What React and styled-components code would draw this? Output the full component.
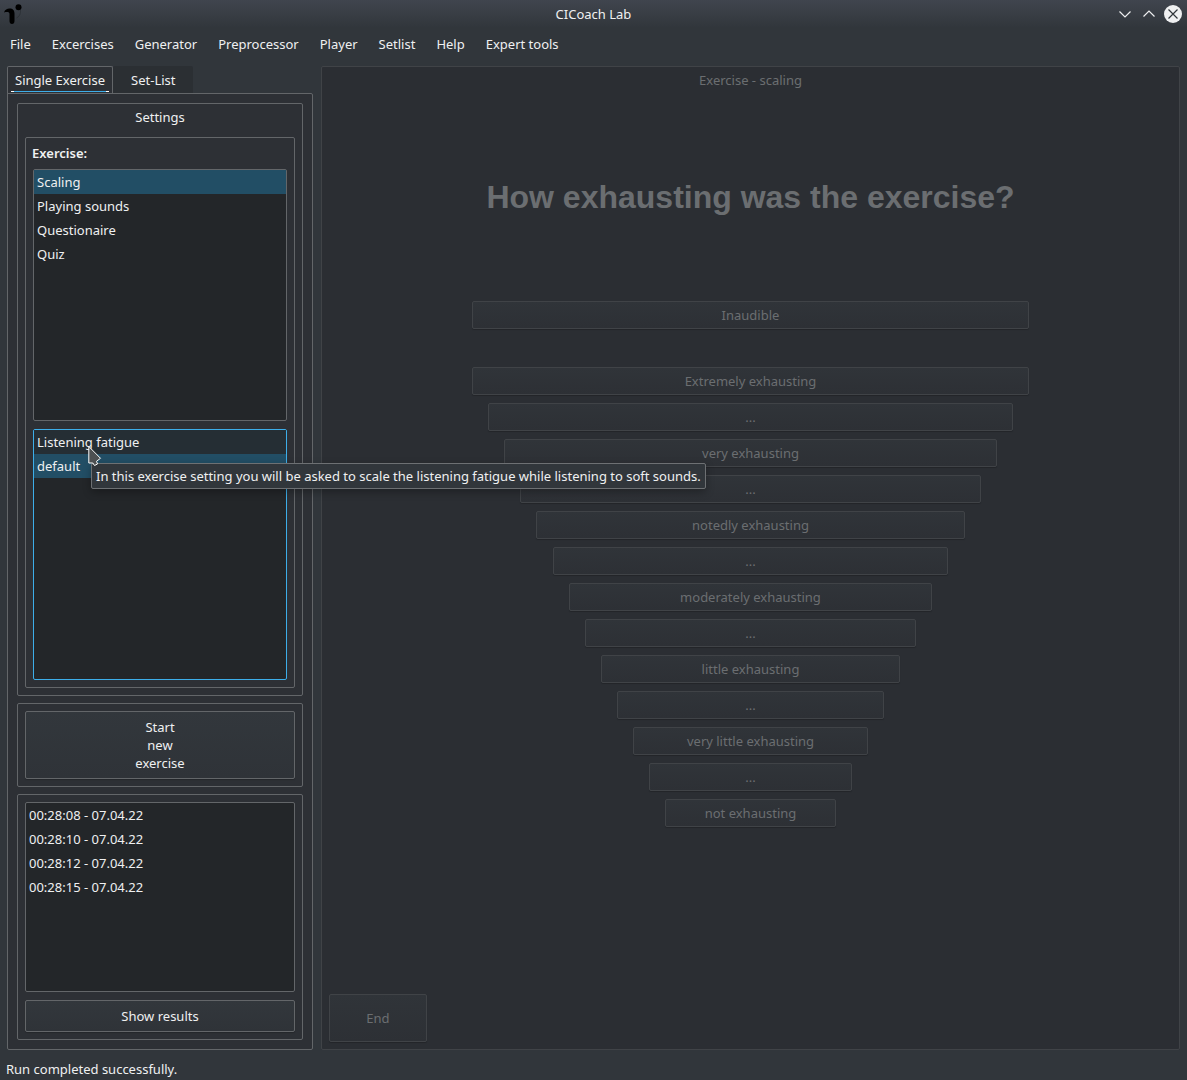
import React, { useState } from "react";
import styled, { createGlobalStyle, css } from "styled-components";

const color = {
  window: "#31363b",
  pane: "#2d3035",
  disabledPane: "#2b2e33",
  view: "#232629",
  line: "#636669",
  faintLine: "#404347",
  text: "#eff0f1",
  mutedText: "#6b6e71",
  accent: "#3daee9",
  selection: "#224e65",
  hover: "#252e34",
};

const GlobalStyle = createGlobalStyle`
  *, *::before, *::after { box-sizing: border-box; }
  body {
    margin: 0;
    background: ${color.window};
    color: ${color.text};
    font: 13px/18px "Noto Sans", sans-serif;
  }
  button { font: inherit; color: inherit; }
`;

const Window = styled.div`
  display: flex;
  flex-direction: column;
  min-height: 100vh;
`;

const TitleBar = styled.header`
  display: grid;
  grid-template-columns: 1fr auto 1fr;
  align-items: center;
  height: 28px;
  padding: 0 4px;
  background: linear-gradient(#40454e, ${color.window});
`;

const AppTitle = styled.h1`
  margin: 0;
  font-size: 13px;
  font-weight: 400;
`;

const WindowControls = styled.div`
  display: flex;
  justify-content: flex-end;
  gap: 4px;
`;

const WindowControl = styled.button`
  display: flex;
  width: 20px;
  height: 20px;
  padding: 0;
  border: 0;
  background: none;
`;

const MenuBar = styled.nav`
  display: flex;
  gap: 1px;
  height: 32px;
`;

const MenuButton = styled.button`
  padding: 0 10px;
  border: 0;
  background: none;
`;

const Workspace = styled.main`
  display: flex;
  flex: 1;
  gap: 8px;
  padding: 6px 7px 0;
`;

const Sidebar = styled.div`
  display: flex;
  flex-direction: column;
  width: 306px;
`;

const TabRow = styled.div`
  display: flex;
  margin-bottom: -1px;
`;

const Tab = styled.button`
  height: 28px;
  border: 0;
  padding: 0 18px;
  background: #2b2f33;
  border-radius: 2px 2px 0 0;
  border-bottom: 1px solid ${color.line};

  ${({ $active }) =>
    $active &&
    css`
      padding: 0 3px;
      border: 1px solid ${color.line};
      border-bottom: 0;
      background: ${color.pane};
    `}
`;

const TabText = styled.span`
  display: block;
  padding: 0 4px;
  border-bottom: 1px solid;
  border-image: linear-gradient(90deg, #fff 4px, ${color.accent} 4px calc(100% - 4px), #fff calc(100% - 4px)) 1;
  line-height: 21px;
`;

const Frame = styled.section`
  display: flex;
  flex-direction: column;
  gap: 8px;
  flex: ${({ $grow }) => ($grow ? "1" : "none")};
  padding: 7px;
  border: 1px solid ${color.line};
  border-radius: 2px;
  background: ${color.pane};
`;

const TabPane = styled(Frame)`
  gap: 7px;
  padding: 9px;
  border-top-left-radius: 0;
`;

const FrameTitle = styled.h2`
  margin: -3px 0 3px;
  font-size: 13px;
  font-weight: 400;
  text-align: center;
`;

const ListLabel = styled.h3`
  margin: -1px;
  font-size: 13px;
  font-weight: 600;
`;

const List = styled.ul`
  flex: ${({ $fixed }) => ($fixed ? "0 0 190px" : "1 0 0")};
  margin: 0;
  padding: 0;
  list-style: none;
  border: 1px solid ${({ $focused }) => ($focused ? color.accent : color.line)};
  border-radius: 2px;
  background: ${color.view};
`;

const ListItem = styled.li`
  position: relative;
`;

const ListButton = styled.button`
  display: block;
  width: 100%;
  height: 24px;
  padding: 0 3px;
  border: 0;
  text-align: left;
  background: ${({ $selected, $hovered }) =>
    $selected ? color.selection : $hovered ? color.hover : "transparent"};
`;

const Tooltip = styled.div`
  position: absolute;
  z-index: 2;
  top: 33px;
  left: 57px;
  padding: 3px 4px;
  border: 1px solid #6d7073;
  border-radius: 2px;
  background: ${color.window};
  box-shadow: 0 3px 8px rgba(0, 0, 0, 0.3);
  white-space: nowrap;
`;

const Pointer = styled.svg`
  position: absolute;
  z-index: 3;
  top: 15px;
  left: 54px;
`;

const PushButton = styled.button`
  padding: 6px;
  border: 1px solid ${color.line};
  border-radius: 2px;
  background: linear-gradient(#32373c, #2f3338);
  box-shadow: 0 1px 1px rgba(0, 0, 0, 0.2);

  &:disabled {
    border-color: ${color.faintLine};
    background: linear-gradient(#303439, #2d3035);
    color: ${color.mutedText};
  }
`;

const StartButton = styled(PushButton)`
  display: flex;
  flex-direction: column;
  align-items: center;
  justify-content: center;
  height: 68px;
`;

const ResultsButton = styled(PushButton)`
  height: 32px;
`;

const ExercisePanel = styled.section`
  display: flex;
  flex-direction: column;
  flex: 1;
  border: 1px solid ${color.faintLine};
  border-radius: 2px;
  background: ${color.disabledPane};
  color: ${color.mutedText};
`;

const PanelTitle = styled.h2`
  margin: 4px 0 0;
  font-size: 13px;
  font-weight: 400;
  text-align: center;
`;

const Question = styled.p`
  margin: 88px 0 84px;
  font: 700 32px/40px "Liberation Sans", Arial, sans-serif;
  text-align: center;
`;

const Scale = styled.div`
  display: flex;
  flex-direction: column;
  gap: 8px;
`;

const ScaleButton = styled(PushButton)`
  height: 28px;
  padding: 0;
  margin: 0 round(calc(17.5% + ${({ $step }) => $step} * 1.88%), 1px);
  ${({ $apart }) => $apart && "margin-bottom: 30px;"}
`;

const EndButton = styled(PushButton)`
  width: 98px;
  height: 48px;
  margin: auto 0 7px 7px;
`;

const StatusBar = styled.footer`
  padding: 10px 6px 2px;
`;

const menus = ["File", "Excercises", "Generator", "Preprocessor", "Player", "Setlist", "Help", "Expert tools"];
const exercises = ["Scaling", "Playing sounds", "Questionaire", "Quiz"];
const runs = ["00:28:08 - 07.04.22", "00:28:10 - 07.04.22", "00:28:12 - 07.04.22", "00:28:15 - 07.04.22"];
const scale = [
  "Extremely exhausting", "...", "very exhausting", "...", "notedly exhausting", "...",
  "moderately exhausting", "...", "little exhausting", "...", "very little exhausting", "...", "not exhausting",
];

function Logo() {
  return (
    <svg width="18" height="24" viewBox="0 0 18 24" aria-hidden="true">
      <path d="M0 10.500C1 7.500 3 6.500 5.500 6.500c3.500 0 5 2 5 5v7.500c0 2-1 3-2.500 3s-2.500-1-2.500-3V12c0-2-2-2.500-5.500-1.500z" fill="#000" />
      <circle cx="14.500" cy="5.200" r="3" fill="#000" />
      <path d="M16.500 8c.2 4-1 6.500-4 8" fill="none" stroke="#23262a" strokeWidth=".5" />
    </svg>
  );
}

export default function App() {
  const [exercise, setExercise] = useState("Scaling");
  const [preset, setPreset] = useState("default");

  return (
    <Window>
      <GlobalStyle />
      <TitleBar>
        <Logo />
        <AppTitle>CICoach Lab</AppTitle>
        <WindowControls>
          <WindowControl aria-label="Minimize">
            <svg width="20" height="20" fill="none" stroke="#eff0f1" strokeWidth="1.2"><path d="M4.500 7.500l5.500 5.500 5.500-5.500" /></svg>
          </WindowControl>
          <WindowControl aria-label="Maximize">
            <svg width="20" height="20" fill="none" stroke="#eff0f1" strokeWidth="1.2"><path d="M4.500 12.500l5.500-5.500 5.500 5.500" /></svg>
          </WindowControl>
          <WindowControl aria-label="Close">
            <svg width="20" height="20" fill="none" stroke="#31363b" strokeWidth="1.2"><circle cx="10" cy="10" r="9" fill="#eff0f1" stroke="none" /><path d="M5.500 5.500l9 9m0-9l-9 9" /></svg>
          </WindowControl>
        </WindowControls>
      </TitleBar>
      <MenuBar>
        {menus.map((menu) => <MenuButton key={menu}>{menu}</MenuButton>)}
      </MenuBar>
      <Workspace>
        <Sidebar>
          <TabRow role="tablist">
            <Tab role="tab" aria-selected="true" $active><TabText>Single Exercise</TabText></Tab>
            <Tab role="tab" aria-selected="false">Set-List</Tab>
          </TabRow>
          <TabPane $grow>
            <Frame $grow>
              <FrameTitle>Settings</FrameTitle>
              <Frame $grow>
                <ListLabel>Exercise:</ListLabel>
                <List>
                  {exercises.map((name) => (
                    <ListItem key={name}>
                      <ListButton $selected={name === exercise} onClick={() => setExercise(name)}>{name}</ListButton>
                    </ListItem>
                  ))}
                </List>
                <List $focused>
                  <ListItem>
                    <ListButton $hovered $selected={preset === "fatigue"} onClick={() => setPreset("fatigue")} aria-describedby="preset-hint">
                      Listening fatigue
                    </ListButton>
                    <Tooltip role="tooltip" id="preset-hint">
                      In this exercise setting you will be asked to scale the listening fatigue while listening to soft sounds.
                    </Tooltip>
                    <Pointer width="14" height="22" viewBox="0 0 14 22" aria-hidden="true">
                      <path d="M.8 1.500v16.500h4l1.700 2.500 3-1.500-1-2.700 4-3z" fill="#4d5052" stroke="#fcfcfc" />
                    </Pointer>
                  </ListItem>
                  <ListItem>
                    <ListButton $selected={preset === "default"} onClick={() => setPreset("default")}>default</ListButton>
                  </ListItem>
                </List>
              </Frame>
            </Frame>
            <Frame>
              <StartButton>
                <span>Start</span>
                <span>new</span>
                <span>exercise</span>
              </StartButton>
            </Frame>
            <Frame>
              <List $fixed>
                {runs.map((run) => <ListItem key={run}><ListButton>{run}</ListButton></ListItem>)}
              </List>
              <ResultsButton>Show results</ResultsButton>
            </Frame>
          </TabPane>
        </Sidebar>
        <ExercisePanel>
          <PanelTitle>Exercise - scaling</PanelTitle>
          <Question>How exhausting was the exercise?</Question>
          <Scale>
            <ScaleButton disabled $step={0} $apart>Inaudible</ScaleButton>
            {scale.map((label, step) => (
              <ScaleButton key={step} disabled $step={step}>{label}</ScaleButton>
            ))}
          </Scale>
          <EndButton disabled>End</EndButton>
        </ExercisePanel>
      </Workspace>
      <StatusBar>Run completed successfully.</StatusBar>
    </Window>
  );
}
